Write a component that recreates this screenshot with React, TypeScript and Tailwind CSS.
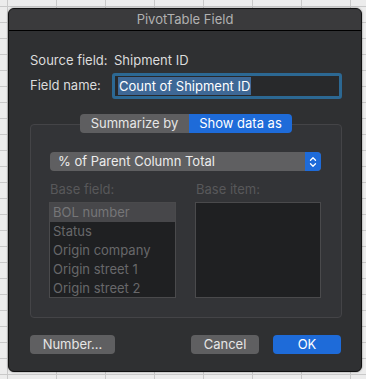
const baseFields = ['BOL number', 'Status', 'Origin company', 'Origin street 1', 'Origin street 2'];

function Stepper() {
  return (
    <svg width="8" height="12" viewBox="0 0 8 12" fill="none" stroke="white" strokeWidth="1.3" strokeLinecap="round" strokeLinejoin="round">
      <path d="M1.5 4.2 L4 1.7 L6.5 4.2" />
      <path d="M1.5 7.8 L4 10.3 L6.5 7.8" />
    </svg>
  );
}

export default function App() {
  return (
    <div
      className="w-[366px] h-[379px] p-2 bg-[#ececec] bg-[linear-gradient(to_right,#c9c9c9_1px,transparent_1px),linear-gradient(to_bottom,#c9c9c9_1px,transparent_1px)] bg-[size:49px_16px] bg-[position:7px_6px] text-[13px]"
      style={{ fontFamily: 'Inter, "Noto Sans", sans-serif' }}
    >
      <div className="w-[354px] h-[364px] rounded-[6px] border border-[#111] bg-[#2f3032] overflow-hidden flex flex-col shadow-[0_0_2px_rgba(0,0,0,0.5)]">
        {/* title bar */}
        <div className="h-[22px] shrink-0 bg-[#3a3a3c] border-b border-black flex items-center justify-center text-[#b1b1b1] text-[13px]">
          PivotTable Field
        </div>

        <div className="flex flex-col pl-[21px] pr-[19px]">
          <div className="mt-[22px] h-4 flex items-center text-[#dcdcdc]">
            <span className="w-[84px]">Source field:</span>
            <span>Shipment ID</span>
          </div>

          <div className="mt-1 h-[26px] flex items-center text-[#dcdcdc]">
            <span className="w-[82px]">Field name:</span>
            <div className="flex-1 h-[26px] rounded-[3px] border-[3px] border-[#2c6893] bg-[#28292b] flex items-center px-[3px]">
              <span className="bg-[#3e6896] text-white leading-[18px] px-px">Count of Shipment ID</span>
            </div>
          </div>

          {/* tabs + group */}
          <div className="mt-[15px] flex flex-col">
            <div className="relative z-10 flex justify-center">
              <div className="flex h-[19px] rounded-[4px] overflow-hidden text-[13px]">
                <div className="w-[109px] bg-[#5e5e60] text-[#e6e6e6] flex items-center justify-center">Summarize by</div>
                <div className="w-[103px] bg-[#1e6bd9] text-white flex items-center justify-center">Show data as</div>
              </div>
            </div>
            <div className="-mt-[9px] rounded-[4px] border border-[#444447] bg-[#333437] pt-[27px] pb-[19px] pl-[18px] pr-5 flex flex-col">
              <div className="ml-px h-[19px] rounded-[4px] overflow-hidden flex bg-[#5f5f61]">
                <div className="flex-1 flex items-center pl-2 text-[#ececec]">% of Parent Column Total</div>
                <div className="w-4 bg-[#1e6bd9] flex items-center justify-center">
                  <Stepper />
                </div>
              </div>

              <div className="mt-[10px] grid grid-cols-[127px_126px] gap-x-[19px]">
                <div className="h-4 leading-4 pl-px text-[#58585a]">Base field:</div>
                <div className="h-4 leading-4 pl-px text-[#58585a]">Base item:</div>
                <div className="mt-[5px] h-[96px] border border-[#4a4a4c] bg-[#1f2022] flex flex-col">
                  {baseFields.map((f, i) => (
                    <div
                      key={f}
                      className={`h-[19px] shrink-0 flex items-center pl-[3px] ${i === 0 ? 'bg-[#47474a] text-[#767678]' : 'text-[#68686a]'}`}
                    >
                      {f}
                    </div>
                  ))}
                </div>
                <div className="mt-[5px] h-[96px] border border-[#4a4a4c] bg-[#1f2022]" />
              </div>
            </div>
          </div>

          {/* buttons */}
          <div className="mt-[17px] flex items-center pr-px">
            <button className="w-[85px] h-[19px] rounded-[4px] bg-[#5f5f61] text-[#e6e6e6] flex items-center justify-center">Number...</button>
            <div className="flex-1" />
            <button className="w-[68px] h-[19px] rounded-[4px] bg-[#5f5f61] text-[#e6e6e6] flex items-center justify-center">Cancel</button>
            <button className="ml-[14px] w-[68px] h-[19px] rounded-[4px] bg-[#1e6bd9] text-white flex items-center justify-center">OK</button>
          </div>
        </div>
      </div>
    </div>
  );
}
